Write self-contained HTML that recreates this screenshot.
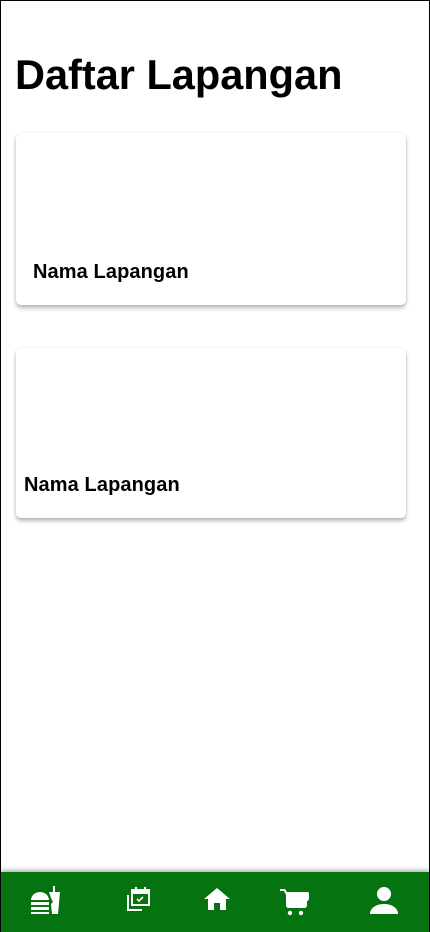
<!DOCTYPE html>
<html><head><meta charset="utf-8"><style>
*{margin:0;padding:0;box-sizing:border-box}
html,body{width:430px;height:932px;overflow:hidden;background:#fff;font-family:"Liberation Sans",sans-serif}
.frame{position:absolute;left:0;top:0;width:430px;height:932px;border:1px solid #000;border-bottom:none}
h1{position:absolute;left:15px;top:51px;font-size:41.5px;font-weight:700;color:#000;letter-spacing:0}
.card{position:absolute;left:16px;width:390px;background:#fff;border-radius:5px;box-shadow:0 3px 4px rgba(0,0,0,.28),0 0 2px rgba(0,0,0,.08)}
.card span{position:absolute;font-size:20px;font-weight:700;color:#000;letter-spacing:0.1px}
.nav{position:absolute;left:1px;right:1px;top:872px;height:60px;background:#05730f;box-shadow:0 -2px 4px rgba(0,0,0,.3)}
.nav svg{position:absolute;top:14px}
</style></head><body>
<div class="frame"></div>
<h1>Daftar Lapangan</h1>
<div class="card" style="top:133px;height:172px"><span style="left:17px;top:128px">Nama Lapangan</span></div>
<div class="card" style="top:348px;height:170px"><span style="left:8px;top:126px">Nama Lapangan</span></div>
<div class="nav">
<svg style="left:29px" width="32" height="30" viewBox="0 0 32 30" fill="#fff">
<path d="M1 14a9 8 0 0 1 18 0z"/><rect x="1" y="16" width="18" height="3"/><rect x="1" y="21" width="18" height="3"/><rect x="1" y="26" width="18" height="2"/>
<path d="M19 6h11l-2 22h-6l-1-10 2-2-2-4z"/><rect x="23" y="0" width="2" height="7"/>
</svg>
<svg style="left:125px" width="26" height="28" viewBox="0 0 26 28" fill="none" stroke="#fff" stroke-width="2">
<rect x="6" y="4" width="17" height="15" fill="none"/><rect x="6" y="4" width="17" height="3" fill="#fff"/>
<path d="M10 1v4M19 1v4"/><path d="M2 9v15h14"/><path d="M11 13l2 2 4-4" stroke-width="1.6"/>
</svg>
<svg style="left:202px" width="28" height="26" viewBox="0 0 28 26" fill="#fff">
<path d="M14 2L1 13h4v11h6v-7h6v7h6V13h4z"/>
</svg>
<svg style="left:279px" width="30" height="30" viewBox="0 0 30 30" fill="#fff">
<path d="M0 3h5l2 3h20c2 0 2 1 2 3v3c0 2-1 3-2 3v4c0 2-1 3-3 3H9c-2 0-3-1-3-3v-10L4 5H0z"/>
<circle cx="10" cy="27" r="2.2"/><circle cx="21" cy="27" r="2.2"/>
</svg>
<svg style="left:368px" width="30" height="30" viewBox="0 0 30 30" fill="#fff">
<circle cx="15" cy="8" r="7"/><path d="M1 28c0-6 6-10 14-10s14 4 14 10z"/>
</svg>
</div>
</body></html>
